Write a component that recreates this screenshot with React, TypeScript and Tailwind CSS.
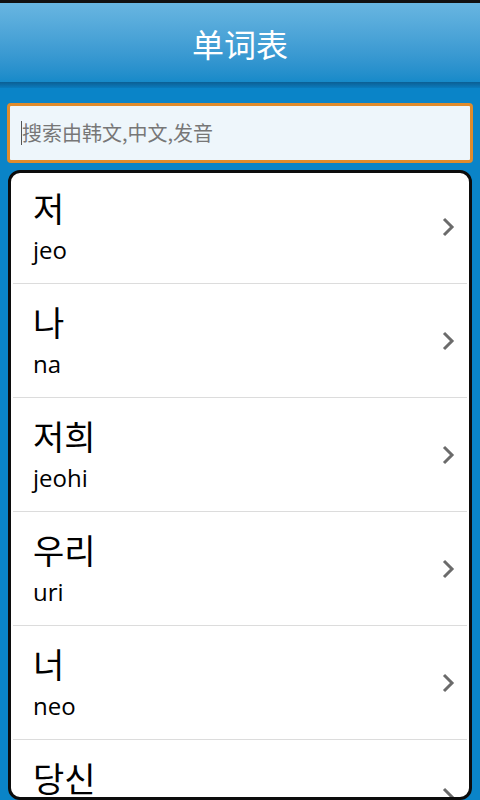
const words = [
  { ko: '저', rom: 'jeo' },
  { ko: '나', rom: 'na' },
  { ko: '저희', rom: 'jeohi' },
  { ko: '우리', rom: 'uri' },
  { ko: '너', rom: 'neo' },
  { ko: '당신', rom: 'dangsin' },
];

const Chevron = () => (
  <svg width="14" height="20" viewBox="0 0 14 20" className="shrink-0">
    <path d="M3 2 L11 10 L3 18" fill="none" stroke="#6b6b6b" strokeWidth="3" />
  </svg>
);

const App = () => {
  return (
    <div
      className="w-[480px] h-[800px] overflow-hidden flex flex-col bg-[#0a84c8]"
      style={{ fontFamily: '"Open Sans", "Noto Sans CJK KR", "Noto Sans CJK SC", sans-serif' }}
    >
      <div className="h-[3px] bg-[#111]" />
      <div className="h-[79px] flex items-center justify-center bg-gradient-to-b from-[#68b6e1] to-[#168ac9]">
        <p className="text-[32px] text-white font-['Noto_Sans_CJK_SC',sans-serif] leading-none">单词表</p>
      </div>
      <div className="h-[6px] bg-gradient-to-b from-[#0b5f94] to-[#0a7bbd]" />

      <div className="px-[7px] pt-[15px]">
        <div className="h-[60px] rounded-[4px] border-[3px] border-[#e08b2c] bg-[#eef6fb] flex items-center pl-[11px]">
          <span className="w-px h-[24px] bg-[#555]" />
          <span className="text-[20px] text-[#777] font-['Noto_Sans_CJK_SC',sans-serif]">
            搜索由韩文,中文,发音
          </span>
        </div>
      </div>

      <div className="mx-[8px] mt-[7px] flex-1 rounded-[12px] border-[3px] border-[#0c0c0c] bg-white overflow-hidden">
        <div className="-mt-[3px]">
          {words.map((w) => (
            <div key={w.rom} className="mx-[2px] h-[114px] border-b border-[#dcdcdc] flex items-center pl-[20px] pr-[12px]">
              <div className="flex-1 flex flex-col gap-[8px] text-black">
                <span className="text-[34px] leading-[38px] font-['Noto_Sans_CJK_KR',sans-serif]">{w.ko}</span>
                <span className="text-[24px] leading-[30px]">{w.rom}</span>
              </div>
              <Chevron />
            </div>
          ))}
        </div>
      </div>
    </div>
  );
};

export default App;
